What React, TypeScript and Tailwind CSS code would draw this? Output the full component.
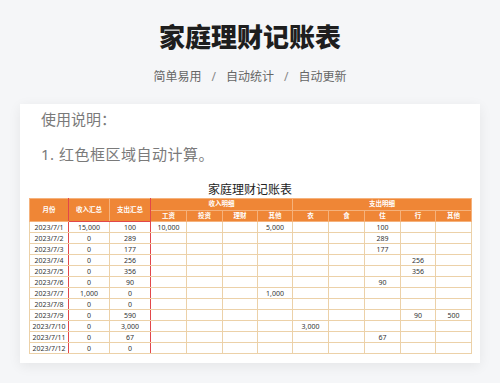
import React from "react";

const font = { fontFamily: '"Noto Sans", "Noto Sans CJK SC", sans-serif' };

type Row = { d: string; inc: string; exp: string; cells: string[] };

const rows: Row[] = [
    { d: "2023/7/1", inc: "15,000", exp: "100", cells: ["10,000", "", "", "5,000", "", "", "100", "", ""] },
    { d: "2023/7/2", inc: "0", exp: "289", cells: ["", "", "", "", "", "", "289", "", ""] },
    { d: "2023/7/3", inc: "0", exp: "177", cells: ["", "", "", "", "", "", "177", "", ""] },
    { d: "2023/7/4", inc: "0", exp: "256", cells: ["", "", "", "", "", "", "", "256", ""] },
    { d: "2023/7/5", inc: "0", exp: "356", cells: ["", "", "", "", "", "", "", "356", ""] },
    { d: "2023/7/6", inc: "0", exp: "90", cells: ["", "", "", "", "", "", "90", "", ""] },
    { d: "2023/7/7", inc: "1,000", exp: "0", cells: ["", "", "", "1,000", "", "", "", "", ""] },
    { d: "2023/7/8", inc: "0", exp: "0", cells: ["", "", "", "", "", "", "", "", ""] },
    { d: "2023/7/9", inc: "0", exp: "590", cells: ["", "", "", "", "", "", "", "90", "500"] },
    { d: "2023/7/10", inc: "0", exp: "3,000", cells: ["", "", "", "", "3,000", "", "", "", ""] },
    { d: "2023/7/11", inc: "0", exp: "67", cells: ["", "", "", "", "", "", "67", "", ""] },
    { d: "2023/7/12", inc: "0", exp: "0", cells: ["", "", "", "", "", "", "", "", ""] },
];

const widths = [39, 41, 41, 36, 36, 35, 35, 36, 36, 36, 35, 36];
const subHeads = ["工资", "投资", "理财", "其他", "衣", "食", "住", "行", "其他"];

const th = "border border-[#f5b27c] bg-[#ef8636] text-white font-bold text-[6.5px] leading-none p-0 text-center";
const td = "border border-[#ecd1a8] text-[7px] leading-none text-[#333] p-0 text-center h-[11px]";

function LedgerTable(): JSX.Element {
    return (
        <table className="table-fixed border-collapse w-[442px]" style={font}>
            <colgroup>
                {widths.map((w, i) => (
                    <col key={i} style={{ width: w }} />
                ))}
            </colgroup>
            <thead>
                <tr className="h-[12px]">
                    <th rowSpan={2} className={th + " border-r-[#e2474a]"}>月份</th>
                    <th rowSpan={2} className={th + " border-l-[#e2474a] border-b-[#e2474a]"}>收入汇总</th>
                    <th rowSpan={2} className={th + " border-r-[#e2474a] border-b-[#e2474a]"}>支出汇总</th>
                    <th colSpan={4} className={th + " border-l-[#e2474a]"}>收入明细</th>
                    <th colSpan={5} className={th}>支出明细</th>
                </tr>
                <tr className="h-[11px]">
                    {subHeads.map((h, i) => (
                        <th key={i} className={th + (i === 0 ? " border-l-[#e2474a]" : "")}>{h}</th>
                    ))}
                </tr>
            </thead>
            <tbody>
                {rows.map((r, ri) => (
                    <tr key={r.d}>
                        <td className={td + " border-r-[#e2474a]"}>{r.d}</td>
                        <td className={td + " border-l-[#e2474a]" + (ri === 0 ? " border-t-[#e2474a]" : "")}>{r.inc}</td>
                        <td className={td + " border-r-[#e2474a]" + (ri === 0 ? " border-t-[#e2474a]" : "")}>{r.exp}</td>
                        {r.cells.map((c, ci) => (
                            <td key={ci} className={td + (ci === 0 ? " border-l-[#e2474a]" : "")}>{c}</td>
                        ))}
                    </tr>
                ))}
            </tbody>
        </table>
    );
}

export default function App(): JSX.Element {
    return (
        <div className="w-[500px] h-[383px] bg-[#f5f6f8] overflow-hidden flex flex-col items-center" style={font}>
            <h1 className="pt-[21px] text-[26px] leading-[32px] font-black text-[#1e1e1e]">家庭理财记账表</h1>
            <div className="mt-[16px] flex items-center gap-[10px] text-[12px] leading-[16px] text-[#666]">
                <span>简单易用</span>
                <span className="text-[#888]">/</span>
                <span>自动统计</span>
                <span className="text-[#888]">/</span>
                <span>自动更新</span>
            </div>
            <div className="mt-[19px] w-[460px] bg-white shadow-[0_3px_12px_rgba(0,0,0,0.07)] px-[9px] pt-[5px] pb-[9px] flex flex-col">
                <div className="pl-[12px] text-[15px] leading-[20px] text-[#7a7a7a]">使用说明：</div>
                <div className="pl-[12px] mt-[15px] text-[15px] leading-[20px] text-[#7a7a7a] tracking-[0.5px]">1. 红色框区域自动计算。</div>
                <div className="mt-[19px] text-center text-[12px] leading-[14px] text-[#222]">家庭理财记账表</div>
                <div className="mt-[1px]">
                    <LedgerTable />
                </div>
            </div>
        </div>
    );
}
